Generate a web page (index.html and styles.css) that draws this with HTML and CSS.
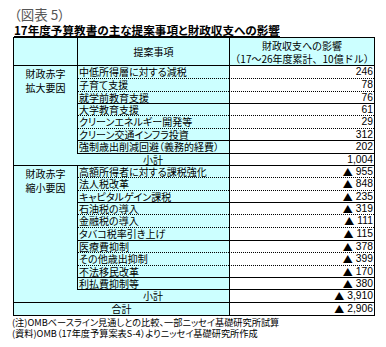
FILE: index.html
```html
<!DOCTYPE html>
<html lang="ja">
<head>
<meta charset="utf-8">
<link rel="stylesheet" href="styles.css">
</head>
<body>
<div class="page">
  <div class="fig">（図表 5）</div>
  <div class="title">17年度予算教書の主な提案事項と財政収支への影響</div>
  <div class="tbl">
    <div class="h h1"></div>
    <div class="h h2">提案事項</div>
    <div class="h h3"><span>財政収支への影響</span><span class="wide">（17～26年度累計、10億ドル）</span></div>

    <div class="grp g1">財政赤字<br>拡大要因</div>
    <div class="t">中低所得層に対する減税</div><div class="n">246</div>
    <div class="t">子育て支援</div><div class="n">78</div>
    <div class="t s">就学前教育支援</div><div class="n s">76</div>
    <div class="t">大学教育支援</div><div class="n">61</div>
    <div class="t">クリーンエネルギー開発等</div><div class="n">29</div>
    <div class="t s">クリーン交通インフラ投資</div><div class="n s">312</div>
    <div class="t s">強制歳出削減回避（義務的経費）</div><div class="n s">202</div>
    <div class="sub">小計</div><div class="n s">1,004</div>

    <div class="grp g2">財政赤字<br>縮小要因</div>
    <div class="t">高額所得者に対する課税強化</div><div class="n"><span class="tri">▲</span> 955</div>
    <div class="t">法人税改革</div><div class="n"><span class="tri">▲</span> 848</div>
    <div class="t s">キャピタルゲイン課税</div><div class="n s"><span class="tri">▲</span> 235</div>
    <div class="t">石油税の導入</div><div class="n"><span class="tri">▲</span> 319</div>
    <div class="t">金融税の導入</div><div class="n"><span class="tri">▲</span> 111</div>
    <div class="t s">タバコ税率引き上げ</div><div class="n s"><span class="tri">▲</span> 115</div>
    <div class="t">医療費抑制</div><div class="n"><span class="tri">▲</span> 378</div>
    <div class="t">その他歳出抑制</div><div class="n"><span class="tri">▲</span> 399</div>
    <div class="t s">不法移民改革</div><div class="n s"><span class="tri">▲</span> 170</div>
    <div class="t s">利払費抑制等</div><div class="n s"><span class="tri">▲</span> 380</div>
    <div class="sub">小計</div><div class="n s"><span class="tri">▲</span> 3,910</div>

    <div class="total">合計</div><div class="n s"><span class="tri">▲</span> 2,906</div>
  </div>
  <div class="notes">
    <div class="note">(注)OMBベースライン見通しとの比較、一部ニッセイ基礎研究所試算</div>
    <div class="note">(資料)OMB（17年度予算案表S-4）よりニッセイ基礎研究所作成</div>
  </div>
</div>
</body>
</html>
```

FILE: styles.css
```css
html, body {
  margin: 0;
  padding: 0;
  background: #ffffff;
}

body {
  font-family: "Noto Sans CJK JP", "Noto Sans", sans-serif;
  font-feature-settings: "palt";
  color: #000;
}

.page {
  display: flex;
  flex-direction: column;
  width: 386px;
}

.fig {
  padding-top: 6px;
  margin-left: 14px;
  font-size: 13.5px;
  line-height: 17px;
  color: #555;
}

.title {
  margin-left: 14px;
  font-size: 11.6px;
  line-height: 14px;
  font-weight: bold;
  text-decoration: underline;
  text-underline-offset: 1px;
  white-space: nowrap;
}

.tbl {
  margin-left: 13px;
  width: 362px;
  box-sizing: border-box;
  display: grid;
  grid-template-columns: 63px 152px 145px;
  grid-template-rows: 28px 13px 13px 12px 12px 13px 12px 13px 12px 12px 13px 12px 12px 13px 13px 12px 13px 12px 12px 13px 13px;
  border-top: 1px solid #000;
  border-left: 1px solid #000;
  border-right: 1px solid #000;
  font-size: 10px;
}

.tbl > div {
  box-sizing: border-box;
  white-space: nowrap;
}

.h {
  background: #ccffff;
  border-bottom: 1px solid #000;
  display: flex;
  flex-direction: column;
  align-items: center;
  justify-content: center;
  text-align: center;
  line-height: 13px;
}

.h2, .h3 {
  border-left: 1px solid #000;
}

.h3 {
  padding-top: 1px;
}

.wide {
  font-feature-settings: normal;
}

.grp {
  background: #ccffff;
  border-bottom: 1px solid #000;
  text-align: center;
  line-height: 14px;
  padding-top: 1px;
}

.g1 {
  grid-row: span 8;
}

.g2 {
  grid-row: span 11;
}

.t {
  background: #ccffff;
  border-left: 1px solid #000;
  border-bottom: 1px dotted #000;
  display: flex;
  align-items: center;
  padding-left: 1px;
  line-height: 12px;
}

.n {
  background: #ffffff;
  border-left: 1px solid #000;
  border-bottom: 1px dotted #000;
  display: flex;
  align-items: center;
  justify-content: flex-end;
  padding-right: 1px;
  line-height: 12px;
  font-family: "Liberation Sans", "Noto Sans CJK JP", sans-serif;
  font-size: 10.3px;
}

.tri {
  font-family: "Noto Sans CJK JP", sans-serif;
  font-size: 10px;
  margin-right: 3px;
}

.s {
  border-bottom-style: solid;
}

.sub {
  background: #ccffff;
  border-bottom: 1px solid #000;
  display: flex;
  align-items: center;
  justify-content: center;
  line-height: 12px;
}

.total {
  grid-column: span 2;
  background: #ccffff;
  border-bottom: 1px solid #000;
  display: flex;
  align-items: center;
  justify-content: center;
  line-height: 12px;
}

.notes {
  margin-left: 12px;
  padding-top: 1px;
  display: flex;
  flex-direction: column;
}

.note {
  font-size: 9.2px;
  line-height: 11px;
  white-space: nowrap;
}
```
